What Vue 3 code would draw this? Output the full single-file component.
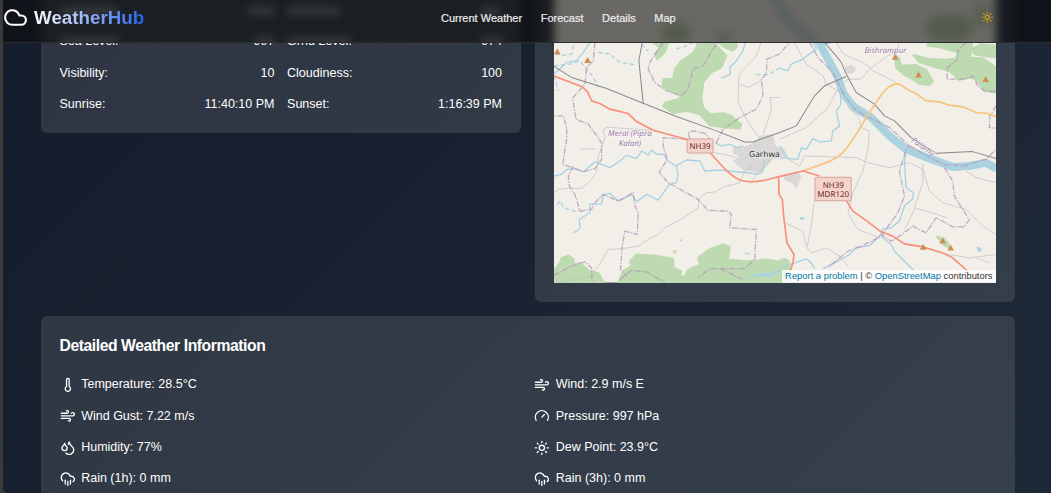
<script setup>
const nav = ['Current Weather', 'Forecast', 'Details', 'Map']

const current = [
  ['Sea Level:', '997'], ['Grnd Level:', '974'],
  ['Visibility:', '10'], ['Cloudiness:', '100'],
  ['Sunrise:', '11:40:10 PM'], ['Sunset:', '1:16:39 PM'],
]

// Soft highlights in the frosted header: [x, y, width]
const glows = [
  [60, 7, 58], [248, 7, 27], [287, 7, 53], [481, 7, 19],
  [60, 37, 58], [254, 37, 21], [287, 37, 64], [481, 37, 21],
]

const wind = ['M12.8 19.6A2 2 0 1 0 14 16H2', 'M17.5 8a2.5 2.5 0 1 1 2 4H2', 'M9.8 4.4A2 2 0 1 1 11 8H2']
const rain = ['M4 14.899A7 7 0 1 1 15.71 8h1.79a4.5 4.5 0 0 1 2.5 8.242', 'M16 14v6', 'M8 14v6', 'M12 16v6']
const sun = ['M16 12a4 4 0 1 1-8 0 4 4 0 0 1 8 0', 'M12 2v2', 'M12 20v2', 'm4.93 4.93 1.41 1.41', 'm17.66 17.66 1.41 1.41', 'M2 12h2', 'M20 12h2', 'm6.34 17.66-1.41 1.41', 'm19.07 4.93-1.41 1.41']
const thermometer = ['M14 4v10.54a4 4 0 1 1-4 0V4a2 2 0 0 1 4 0Z']
const gauge = ['m12 14 4-4', 'M3.34 19a10 10 0 1 1 17.32 0']
const droplets = [
  'M7 16.3c2.2 0 4-1.83 4-4.05 0-1.16-.57-2.26-1.71-3.19S7.29 6.75 7 5.3c-.29 1.45-1.14 2.84-2.29 3.76S3 11.1 3 12.25c0 2.22 1.8 4.05 4 4.05z',
  'M12.56 6.6A10.97 10.97 0 0 0 14 3.02c.5 2.5 2 4.9 4 6.5s3 3.5 3 5.5a6.98 6.98 0 0 1-11.91 4.97',
]

const details = [
  { icon: thermometer, text: 'Temperature: 28.5°C' },
  { icon: wind, text: 'Wind: 2.9 m/s E' },
  { icon: wind, text: 'Wind Gust: 7.22 m/s' },
  { icon: gauge, text: 'Pressure: 997 hPa' },
  { icon: droplets, text: 'Humidity: 77%' },
  { icon: sun, text: 'Dew Point: 23.9°C' },
  { icon: rain, text: 'Rain (1h): 0 mm' },
  { icon: rain, text: 'Rain (3h): 0 mm' },
]

const forests = [
  '340,130 345,115 380,110 395,120 385,130 375,160 352,180 345,165 360,145',
  '475,130 520,130 560,170 545,205 515,220 490,250 485,300 490,325 510,345 550,342 575,350 590,365 605,375 600,388 555,385 510,378 480,345 440,335 400,342 370,322 375,310 415,300 425,290 400,280 368,262 370,240 400,240 405,210 425,185 450,170 465,155',
  '530,125 550,115 585,115 592,142 580,155 555,145',
  '1065,165 1080,180 1085,200 1130,198 1160,212 1180,245 1170,258 1140,255 1120,240 1090,225 1070,205',
  '1122,168 1170,180 1220,182 1250,178 1255,160 1200,145 1165,140 1163,100 1290,110 1300,148 1290,175 1330,178 1370,205 1370,280 1335,275 1310,240 1285,235 1260,243 1230,215 1190,205 1140,190',
  '1300,150 1325,136 1370,140 1370,175 1330,170 1305,165',
  '42,815 60,790 65,775 85,768 102,780 100,795 120,790 150,815 175,820 192,849 42,849',
  '235,849 250,815 275,800 270,785 290,765 345,768 400,778 402,805 425,815 420,830 435,832 445,810 480,795 475,775 510,748 550,735 570,742 565,780 620,785 680,780 750,792 750,849',
  '718,785 735,778 747,785 735,798 718,802',
  '1192,711 1215,718 1228,735 1230,745 1215,738',
]

const cities = [
  '580,445 620,440 650,425 660,410 700,405 708,440 735,450 740,475 700,480 680,500 665,520 610,512 580,485 600,470 580,465',
  '915,203 935,198 950,205 945,220 925,225 915,218',
  '730,532 770,515 785,530 772,567 755,550 735,542',
]

const streams = [
  'M617 130 L610 155 L590 185 L570 205 L572 225 L545 238',
  'M150 130 L130 160 L110 185 L80 190 L42 225',
  'M42 530 L65 525 L82 510 L105 507 L130 517 L165 488 L210 505 L240 485 L260 468 L290 478 L305 455 L325 467 L335 452 L350 465 L370 465 L385 485 L408 500 L440 482 L480 485 L495 515 L540 512 L600 518 L655 524 L668 518 L675 485',
  'M410 500 L415 525 L410 550 L388 555 L355 602 L320 585 L290 607 L277 585 L235 605 L210 582 L190 587 L185 613 L150 615 L150 640 L118 660 L120 687 L102 700',
  'M525 430 L545 440 L570 435 L590 445 L610 440',
  'M720 208 L745 215 L755 195 L790 180 L830 150 L820 130 M840 135 L870 133',
  'M905 260 L903 318 L890 335 L900 380 L880 395 L875 425 L840 428 L820 418 L800 450 L785 445 L775 480 L745 477 L720 440',
  'M1100 450 L1095 490 L1100 565 L1122 580 L1120 598 L1095 620 L1080 665 L1055 685 L1028 690 L1020 710 L990 738 L950 745 L930 765 L880 793 L850 807',
  'M1025 710 L1055 735 L1065 755 L1110 800 L1125 815',
  'M720 807 L765 790 L800 778 L815 790 L825 807',
]

const tracks = [
  'M42 580 L55 570 L85 567 L125 567 L150 545 L170 520 L175 470 L185 445 L195 415 L190 390 L205 384 L260 388 L330 393',
  'M155 825 L185 785 L205 750 L250 747 L295 740 L325 720 L355 705 L375 685 L400 672 L430 655 L475 625 L478 598 L500 580 L530 577 L550 563 L600 550 L615 515 L640 500',
  'M155 830 L100 840 L60 849',
  'M665 130 L650 170 L598 225 L595 310 L620 360 L650 405 L665 420',
  'M600 255 L625 265 L665 245 M720 295 L692 295 L695 335 L670 405 M120 450 L165 448',
  'M520 460 L555 465 L590 475 M630 555 L655 520 L680 500 L690 480',
  'M765 130 L780 160 L800 195 L850 230 L860 255 L910 285 L930 330 L955 350 L965 385 L990 395 L985 450 L970 515 L940 580 L925 640 L955 690 L1020 715',
  'M890 130 L910 165 L960 185 L985 200 L1000 215 L1070 250',
  'M1078 130 L1075 155 L1045 170 L990 210 L965 240 L925 240 L895 270 L865 325 L800 385 L720 420',
  'M720 480 L740 475 L780 500 L795 470 L950 475 L985 490 L1050 505 L1110 490 L1150 510 L1170 575 L1210 610 L1280 630 L1330 680 L1370 705',
  'M1150 495 L1150 550 L1120 640 L1095 690 M1125 625 L1225 655 M1280 515 L1310 535 L1370 550',
  'M825 600 L815 680 L802 745 L815 760 L860 745 L900 770 L925 800 M735 670 L790 695 L800 740',
  'M1230 765 L1290 775 L1330 770 L1370 765 M1310 775 L1350 790',
]

const railways = [
  'M42 202 L95 235 L200 268 L310 312 L410 352 L530 395 L615 428 L640 428 L720 400 L770 380 L800 330 L825 290 L855 260 L920 232',
  'M310 312 L297 185 L307 130',
  'M850 125 L885 165 L905 190 L920 225 L950 280 L1005 315 L1035 350 L1065 365 L1115 415 L1190 462 L1300 457 L1370 478',
]

const boundaries = [
  'M165 130 L160 185 L140 205 L135 255 L120 272 L98 297 L108 360 L145 375 L185 430 L185 480 L165 508 L130 517 L68 495 L80 420 L80 385 L70 350 L42 350',
  'M100 500 L85 530 L88 560 L105 585 L120 635 L155 630 L160 615 L190 585 L235 605 L280 580 L285 620 L295 640 L292 705 L255 695 L247 740 L242 810 L260 830',
  'M370 130 L330 190 L325 210 L345 250 L380 275 L425 290 L445 270 L460 210 L490 200 L520 150 L535 130',
  'M440 420 L370 415 L370 440 L382 480 L358 520 L385 550 L475 600 L505 633 L565 635 L575 645 L570 685 L650 690 L645 780 L615 807 L510 807 L475 835',
  'M42 827 L95 800 L135 787 L155 805 L157 849 M240 840 L275 812 L320 817 L375 849 M540 807 L610 840',
  'M450 420 L445 400 L460 395 L495 402 L510 420 M530 430 L550 390 L600 355 L650 330 L670 290 L665 240 L680 225 L682 180 L720 165 L750 130',
  'M810 130 L835 175 L880 220 L915 290 L950 335 L990 355 L1050 385 L1110 440 L1100 450 L1080 515 L1095 590 L1075 640 L1025 710 L970 738 L925 755 L865 803',
  'M1110 440 L1210 495 L1270 500 L1340 480 L1370 450 M1215 505 L1240 545 L1245 590 L1270 630 L1290 660 L1275 682 L1240 682 L1190 655 L1160 700 L1120 680 L1080 710 L1055 725 L1025 705',
  'M1280 130 L1255 155 L1255 180 L1225 205 L1222 240 L1280 240 L1302 230 L1315 260 L1335 275 L1370 278 M1370 320 L1352 350 L1350 385 L1370 387',
]

const peaks = [[52, 157], [143, 183], [1067, 173], [1137, 226], [1339, 240], [1151, 742], [1210, 723], [1234, 744]]
</script>

<template>
  <div class="page">
    <header class="topbar">
      <svg class="frost" viewBox="3 0 1048 42" preserveAspectRatio="none">
        <rect x="3" width="1048" height="42" fill="#10141a" />
        <g class="soft">
          <rect x="41" y="-20" width="480" height="90" fill="#1b1e22" />
          <rect x="535" y="-20" width="480" height="90" fill="#181b20" />
          <rect x="554" y="-20" width="442" height="90" fill="#6a6865" />
          <ellipse cx="676" cy="33" rx="15" ry="12" fill="#545b4b" />
          <ellipse cx="724" cy="38" rx="9" ry="6" fill="#565c4e" />
          <ellipse cx="950" cy="28" rx="24" ry="14" fill="#535b4c" />
          <ellipse cx="982" cy="14" rx="9" ry="14" fill="#5a6052" />
          <path d="M771 -8 L787 18 L818 46" fill="none" stroke="#555e60" stroke-width="9" />
        </g>
        <rect v-for="[x, y, w] in glows" :key="`${x}-${y}`" :x="x" :y="y" :width="w" height="8" class="glow" />
      </svg>
      <div class="brand">
        <svg class="cloud" viewBox="0 0 24 24"><path d="M17.5 19H9a7 7 0 1 1 6.71-9h1.79a4.5 4.5 0 1 1 0 9Z" /></svg>
        <span class="brand-name">WeatherHub</span>
      </div>
      <nav class="nav"><a v-for="n in nav" :key="n">{{ n }}</a></nav>
      <svg class="theme" viewBox="0 0 24 24"><path v-for="d in sun" :key="d" :d="d" /></svg>
    </header>

    <div class="scroller">
      <main class="content">
        <div class="columns">
          <section class="card current">
            <div v-for="[k, v] in current" :key="k" class="pair"><span>{{ k }}</span><span>{{ v }}</span></div>
          </section>

          <section class="card">
            <div class="map">
              <svg class="tiles" viewBox="42 99 1328 750" preserveAspectRatio="none">
                <rect x="42" y="99" width="1328" height="750" fill="#f2efe9" />
                <polygon v-for="p in forests" :key="p" :points="p" class="forest" />
                <polygon v-for="p in cities" :key="p" :points="p" class="city" />
                <path v-for="d in tracks" :key="d" :d="d" class="track" />
                <path v-for="d in streams" :key="d" :d="d" class="stream" />
                <path class="stream dashed" d="M100 140 L95 165 L65 170 L42 160 M42 200 L90 195 L120 185 L160 235 L175 265 M175 160 L210 165 L240 190 L290 198 M42 230 L55 275 M305 135 L325 157 M410 150 L440 140 L460 130 M650 227 L690 225 L720 205 M50 615 L62 605 L70 625 L100 635 L130 635" />
                <path class="river" d="M815 95 L838 130 L868 185 L895 235 L912 285 L945 325 L995 355 L1050 410 L1100 450 L1155 472 L1210 492 L1240 503 L1290 500 L1340 490 L1372 508" />
                <path class="lake" d="M620 840 L650 822 L690 820 L720 808 L720 818 L690 832 L655 830 Z M780 652 L795 655 L792 662 L782 660 Z M418 720 L428 720 L424 726 Z M610 761 L630 760 L628 765 Z M1312 740 L1325 745 L1328 757 L1315 755 Z" />
                <path v-for="d in boundaries" :key="d" :d="d" class="boundary" />
                <path v-for="d in railways" :key="d" :d="d" class="rail" />
                <path class="secondary" d="M790 515 L860 490 Q900 475 920 448 C965 390 980 345 1035 275 Q1065 245 1085 258 L1110 275 L1130 283 L1160 305 L1200 308 L1230 318 L1270 323 L1310 340 L1345 343 L1372 352" />
                <path class="trunk" d="M42 231 L125 262 L143 278 L155 305 L180 313 L210 330 L265 343 L290 367 L340 393 L440 420 L490 440 C530 475 560 525 600 542 Q640 555 705 535 L790 515 L840 530 M918 600 L940 635 L975 660 L1025 697 L1060 710 L1095 733 L1150 742 L1215 762 L1240 775 L1285 815 M717 535 L718 585 L728 600 L732 650 L742 730 L763 765 L760 788 L752 815" />
                <circle cx="405" cy="757" r="6" fill="#d1d9ad" />
                <path v-for="[x, y] in peaks" :key="x" :d="`M${x} ${y - 9}l10 18h-20z`" class="peak" />
                <rect class="shield" x="442" y="419" width="78" height="42" rx="4" />
                <rect class="shield" x="826" y="534" width="109" height="70" rx="4" />
                <g class="road-label">
                  <text x="481" y="449">NH39</text>
                  <text x="881" y="565">NH39</text>
                  <text x="881" y="594">MDR120</text>
                </g>
                <text class="town" x="674" y="474">Garhwa</text>
                <g class="district">
                  <text x="270" y="411">Meral (Pipra</text>
                  <text x="270" y="440">Kalan)</text>
                  <text x="1038" y="162">Bishrampur</text>
                  <text transform="translate(1147 449) rotate(35)">Palamu</text>
                </g>
              </svg>
              <div class="credit"><a>Report a problem</a> | © <a>OpenStreetMap</a> contributors</div>
            </div>
          </section>
        </div>

        <section class="card details">
          <h2>Detailed Weather Information</h2>
          <div class="detail-grid">
            <div v-for="d in details" :key="d.text" class="detail">
              <svg class="icon" viewBox="0 0 24 24"><path v-for="p in d.icon" :key="p" :d="p" /></svg>
              <span>{{ d.text }}</span>
            </div>
          </div>
        </section>
      </main>
    </div>
  </div>
</template>

<style>
body { background: #3b3b3b; overflow: hidden; }
</style>

<style scoped>
.page {
  box-sizing: border-box;
  height: 493px;
  margin-left: 3px;
  overflow: hidden;
  border-bottom-left-radius: 5px;
  background: linear-gradient(135deg, #151c2b 0%, #1e2937 100%);
  color: #fff;
  font: 12.5px/18.8px "Liberation Sans", Arial, sans-serif;
}
.topbar {
  position: relative;
  box-sizing: border-box;
  height: 43px;
  padding: 0 57px 7px 0;
  display: flex;
  justify-content: space-between;
  align-items: center;
  border-bottom: 1px solid #2a2c30;
  overflow: hidden;
}
.frost { position: absolute; inset: 0; width: 100%; height: 42px; }
.soft { filter: blur(5px); }
.glow { fill: rgba(255, 255, 255, 0.13); filter: blur(4px); }
.brand, .nav, .theme { position: relative; }
.brand { display: flex; align-items: center; gap: 6px; }
.cloud, .theme, .icon { fill: none; stroke: currentColor; stroke-width: 2; stroke-linecap: round; stroke-linejoin: round; flex: none; }
.cloud { width: 25px; height: 25px; }
.brand-name {
  font-size: 18.8px;
  font-weight: 700;
  line-height: 25px;
  background: linear-gradient(90deg, #fff, #2563eb);
  background-clip: text;
  -webkit-background-clip: text;
  color: transparent;
}
.nav { display: flex; gap: 18.6px; margin-right: 9px; padding-top: 1px; font-size: 11px; color: #ececec; -webkit-text-stroke: 0.2px; }
.theme { width: 12.6px; height: 12.6px; color: #d9a915; }

.scroller { height: 450px; overflow: hidden; }
.content { margin-top: -29.6px; padding: 0 36px 0 37.5px; }
.columns { display: grid; grid-template-columns: 480.5px 480px; column-gap: 14px; align-items: start; }
.card {
  box-sizing: border-box;
  border: 1px solid rgba(60, 60, 60, 0.35);
  border-radius: 6px;
  padding: 18px;
  background: rgba(255, 255, 255, 0.11);
}
.current { display: grid; grid-template-columns: 1fr 1fr; gap: 12.6px; }
.pair { display: flex; justify-content: space-between; }
.map { position: relative; height: 250.6px; overflow: hidden; }
.tiles { display: block; width: 100%; height: 250.6px; }
.credit {
  position: absolute;
  right: 0;
  bottom: 0;
  padding: 0 3.5px 1.5px;
  background: rgba(255, 255, 255, 0.8);
  color: #333;
  font-size: 9.4px;
  line-height: 12px;
  white-space: nowrap;
}
.credit a { color: #0078a8; }

.forest { fill: #bedab1; stroke: #bedab1; stroke-width: 6; stroke-linejoin: round; }
.city { fill: #d9d8d7; }
.tiles path { fill: none; stroke-linejoin: round; }
.tiles .track { stroke: #bdbcbc; stroke-width: 2; }
.tiles .stream { stroke: #a8d2e1; stroke-width: 4; }
.tiles .dashed { stroke-dasharray: 13 8; }
.tiles .river { stroke: #aad3df; stroke-width: 24; }
.tiles .lake { fill: #aad3df; }
.tiles .boundary { stroke: #b897ba; stroke-width: 4; stroke-dasharray: 17 4 4 4; opacity: 0.8; }
.tiles .rail { stroke: #8a8988; stroke-width: 3; }
.tiles .secondary { stroke: #f8c27a; stroke-width: 5; }
.tiles .trunk { stroke: #f98f78; stroke-width: 5; }
.tiles .peak { fill: #cf8d51; }
.shield { fill: #f3d5cd; stroke: #d8a398; stroke-width: 3; }
.tiles text { text-anchor: middle; font-family: "Noto Sans", "Open Sans", sans-serif; text-rendering: geometricPrecision; }
.road-label { font-size: 24px; fill: #6f2424; }
.town { font-size: 25px; fill: #222; stroke: #fff; stroke-width: 4; stroke-opacity: 0.6; paint-order: stroke; }
.tiles .district { font-size: 24px; font-style: italic; fill: #936d9b; stroke: #fff; stroke-width: 4; stroke-opacity: 0.6; paint-order: stroke; }
.tiles .district text { font-family: "Open Sans", "Noto Sans", sans-serif; }

.details { margin-top: 14px; height: 220px; }
.details h2 { margin: 0 0 18.2px; font-size: 15.7px; line-height: 22px; font-weight: 700; letter-spacing: -0.42px; }
.detail-grid { display: grid; grid-template-columns: 1fr 1fr; gap: 12.6px; }
.detail { display: flex; align-items: center; gap: 6px; }
.icon { width: 15.7px; height: 15.7px; }
</style>
